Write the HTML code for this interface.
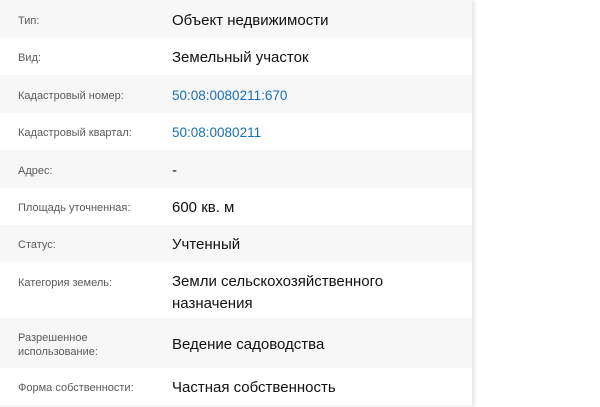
<!DOCTYPE html>
<html><head><meta charset="utf-8"><style>
html,body{margin:0;width:600px;height:407px;background:#fff;overflow:hidden;font-family:"Liberation Sans","DejaVu Sans",sans-serif}
.p{position:absolute;left:0;top:0;width:472px;height:407px;overflow:hidden;box-shadow:2px 0 4px rgba(0,0,0,0.12)}
.r{position:relative;display:flex;align-items:center}
.r:nth-child(odd){background:#f7f7f7}
.l{position:absolute;left:18px;width:150px;font-size:11px;color:#5a5a5a;line-height:14px;margin-top:3px}
.v{position:absolute;left:172px;font-size:15px;color:#111;line-height:22px;margin-top:3px}
a{color:#1a6fb0;text-decoration:none;font-size:13.5px}
</style></head><body><div class="p">
<div class="r" style="height:38px"><div class="l">Тип:</div><div class="v">Объект недвижимости</div></div>
<div class="r" style="height:37px"><div class="l">Вид:</div><div class="v">Земельный участок</div></div>
<div class="r" style="height:38px"><div class="l">Кадастровый номер:</div><div class="v"><a>50:08:0080211:670</a></div></div>
<div class="r" style="height:37px"><div class="l">Кадастровый квартал:</div><div class="v"><a>50:08:0080211</a></div></div>
<div class="r" style="height:38px"><div class="l">Адрес:</div><div class="v">-</div></div>
<div class="r" style="height:37px"><div class="l">Площадь уточненная:</div><div class="v">600 кв. м</div></div>
<div class="r" style="height:37px"><div class="l">Статус:</div><div class="v">Учтенный</div></div>
<div class="r" style="height:56px;align-items:flex-start"><div class="l" style="top:11px">Категория земель:</div><div class="v" style="top:6px">Земли сельскохозяйственного<br>назначения</div></div>
<div class="r" style="height:50px"><div class="l">Разрешенное<br>использование:</div><div class="v">Ведение садоводства</div></div>
<div class="r" style="height:37px;background:#fff"><div class="l">Форма собственности:</div><div class="v">Частная собственность</div></div>
<div class="r" style="height:20px;background:#f7f7f7"></div>
</div></body></html>
